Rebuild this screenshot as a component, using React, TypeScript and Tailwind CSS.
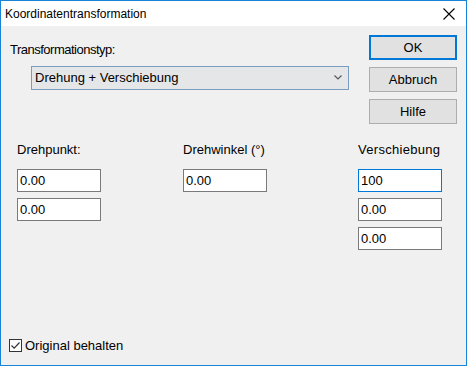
import React, { useState } from 'react';

const font = { fontFamily: '"Liberation Sans", Arial, sans-serif' };

function Field({ value, focused }: { value: string; focused?: boolean }) {
  return (
    <input
      type="text"
      defaultValue={value}
      className={`w-[84px] h-[23px] bg-white px-[2px] text-[13px] text-black outline-none border ${
        focused ? 'border-[#0078d7]' : 'border-[#7a7a7a]'
      }`}
    />
  );
}

function Btn({ label, primary }: { label: string; primary?: boolean }) {
  return (
    <button
      className={`w-[88px] h-[25px] bg-[#e1e1e1] text-[13px] text-black ${
        primary ? 'border-2 border-[#0078d7]' : 'border border-[#adadad]'
      }`}
    >
      {label}
    </button>
  );
}

export default function App() {
  const [keep, setKeep] = useState(true);

  return (
    <div className="w-[467px] h-[366px] border border-[#1883d7] bg-[#f0f0f0] flex flex-col" style={font}>
      <div className="h-[25px] bg-white flex items-center justify-between pl-[4px] pr-[10px]">
        <span className="text-[12px] text-black">Koordinatentransformation</span>
        <svg width="12" height="12" viewBox="0 0 12 12" className="mr-[1px]">
          <path d="M0.5 0.5 L11.5 11.5 M11.5 0.5 L0.5 11.5" stroke="#000" strokeWidth="1.1" />
        </svg>
      </div>

      <div className="flex-1 flex flex-col pl-[16px] pr-[8px]">
        <div className="flex">
          <div className="flex-1">
            <div className="ml-[-7px] mt-[14px] text-[13px] tracking-[-0.5px] text-black">Transformationstyp:</div>
            <div className="mt-[6px] ml-[14px] w-[318px] h-[24px] bg-[#e5e6e8] border border-[#7a9cbf] flex items-center justify-between pl-[3px] pr-[6px]">
              <span className="text-[13px] text-black">Drehung + Verschiebung</span>
              <svg width="8" height="5" viewBox="0 0 8 5">
                <path d="M0.5 0.5 L4 4 L7.5 0.5" stroke="#555" strokeWidth="1.1" fill="none" />
              </svg>
            </div>
          </div>
          <div className="flex flex-col gap-[7px] mt-[9px] mr-[1px]">
            <Btn label="OK" primary />
            <Btn label="Abbruch" />
            <Btn label="Hilfe" />
          </div>
        </div>

        <div className="flex mt-[18px] text-[13px] text-black">
          <div className="w-[166px]">
            <div className="h-[15px] leading-[15px]">Drehpunkt:</div>
            <div className="mt-[12px] flex flex-col gap-[6px]">
              <Field value="0.00" />
              <Field value="0.00" />
            </div>
          </div>
          <div className="w-[175px]">
            <div className="h-[15px] leading-[15px]">Drehwinkel (°)</div>
            <div className="mt-[12px] flex flex-col gap-[6px]">
              <Field value="0.00" />
            </div>
          </div>
          <div>
            <div className="h-[15px] leading-[15px] tracking-[0.3px]">Verschiebung</div>
            <div className="mt-[12px] flex flex-col gap-[6px]">
              <Field value="100" focused />
              <Field value="0.00" />
              <Field value="0.00" />
            </div>
          </div>
        </div>

        <div className="mt-auto mb-[10px] ml-[-8px] flex items-center gap-[3px]">
          <button
            onClick={() => setKeep(!keep)}
            className="w-[13px] h-[13px] bg-white border border-[#333] flex items-center justify-center"
          >
            {keep && (
              <svg width="11" height="11" viewBox="0 0 11 11">
                <path d="M1.5 5.5 L4.2 8.2 L9.5 2.5" stroke="#333" strokeWidth="1.2" fill="none" />
              </svg>
            )}
          </button>
          <span className="text-[13px] text-black">Original behalten</span>
        </div>
      </div>
    </div>
  );
}
